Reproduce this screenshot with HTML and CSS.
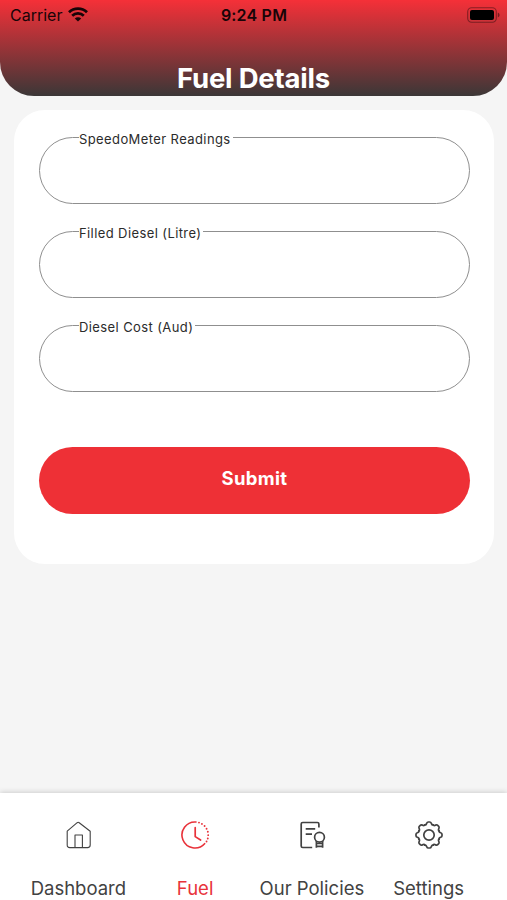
FILE: index.html
```
<!DOCTYPE html>
<html lang="en">
<head>
	<meta charset="utf-8">
	<meta name="viewport" content="width=device-width, initial-scale=1.0">
	<title>Fuel Details</title>
	<link rel="stylesheet" href="styles.css">
</head>
<body>
	<div class="screen">
		<header class="header">
			<div class="status-bar">
				<div class="carrier">
					<span>Carrier</span>
					<svg class="wifi" width="20" height="15" viewBox="0 0 20 15" fill="none" stroke="currentColor" stroke-width="2.7">
						<path d="M1 5.3a12.8 12.8 0 0 1 18 0"/>
						<path d="M4.2 8.7a8.2 8.2 0 0 1 11.6 0"/>
						<path d="M10 14.6L6.8 11.5a4.5 4.5 0 0 1 6.4 0z" fill="currentColor" stroke="none"/>
					</svg>
				</div>
				<span class="time">9:24 PM</span>
				<svg class="battery" width="33" height="16" viewBox="0 0 33 16">
					<rect x=".7" y=".7" width="28.6" height="14.6" rx="4" fill="none" stroke="#000" stroke-opacity=".4" stroke-width="1.1"/>
					<rect x="3" y="3" width="24" height="10" rx="2"/>
					<path d="M30.8 5.5q1.8.8 1.8 2.5t-1.8 2.5z" fill-opacity=".45"/>
				</svg>
			</div>
			<h1 class="title">Fuel Details</h1>
		</header>

		<form class="card">
			<fieldset class="field">
				<legend>SpeedoMeter Readings</legend>
				<input type="text" name="speedometer" aria-label="SpeedoMeter Readings">
			</fieldset>
			<fieldset class="field">
				<legend>Filled Diesel (Litre)</legend>
				<input type="text" name="litres" aria-label="Filled Diesel (Litre)">
			</fieldset>
			<fieldset class="field">
				<legend>Diesel Cost (Aud)</legend>
				<input type="text" name="cost" aria-label="Diesel Cost (Aud)">
			</fieldset>
			<button class="submit" type="button">Submit</button>
		</form>

		<nav class="tabs">
			<a class="tab">
				<svg width="28" height="28" viewBox="-1 0 28 28" fill="none" stroke="currentColor" stroke-width="1.1" stroke-linejoin="round">
					<path d="M2.2 10.2L12.2 1.7q1-.8 2 0L25.200 10.2V24q0 2.6-2.6 2.6H4.800Q2.200 26.6 2.200 24z"/>
					<path d="M10 26.6V14h7.4v12.6"/>
				</svg>
				<span>Dashboard</span>
			</a>
			<a class="tab active">
				<svg width="28" height="28" viewBox="-1 0 28 28" fill="none" stroke="currentColor" stroke-width="1.6" stroke-linecap="round">
					<path d="M14 1A13 13 0 1 0 22.6 22.7"/>
					<path d="M17 1.6A13 13 0 0 1 24.4 20.7" stroke-width="1.9" stroke-dasharray="0 3.3"/>
					<path d="M13.2 6.7V15.6L18.6 19" stroke-width="1.7" stroke-linejoin="round"/>
				</svg>
				<span>Fuel</span>
			</a>
			<a class="tab">
				<svg width="28" height="28" viewBox="-.7 0 28 28" fill="none" stroke="currentColor" stroke-width="1.7">
					<path d="M20.2 6.5V3q0-1.5-1.5-1.5H4Q2.5 1.5 2.5 3V25q0 1.5 1.5 1.5H13.5"/>
					<path d="M7 7.8H16.5M7 13.2H13.3"/>
					<circle cx="20.8" cy="16.200" r="4.9"/>
					<path d="M17.7 20V26.8M23.9 20V26.8M17.7 22.5H23.9M17.7 25.4H23.9"/>
				</svg>
				<span>Our Policies</span>
			</a>
			<a class="tab">
				<svg width="28" height="28" viewBox="-14 -14 28 28" fill="none" stroke="currentColor" stroke-width="1.7" stroke-linecap="round">
					<defs>
						<path id="tooth" d="M-4.2-10.1C-3-9.7-2.7-10.6-2.3-11.7Q-1.8-13-.7-13H.7Q1.8-13 2.3-11.7C2.7-10.6 3-9.7 4.2-10.1"/>
					</defs>
					<use href="#tooth"/>
					<use href="#tooth" transform="rotate(45)"/>
					<use href="#tooth" transform="rotate(90)"/>
					<use href="#tooth" transform="rotate(135)"/>
					<use href="#tooth" transform="rotate(180)"/>
					<use href="#tooth" transform="rotate(225)"/>
					<use href="#tooth" transform="rotate(270)"/>
					<use href="#tooth" transform="rotate(315)"/>
					<circle r="5.2"/>
				</svg>
				<span>Settings</span>
			</a>
		</nav>
	</div>
</body>
</html>
```
FILE: styles.css
```
* {
	box-sizing: border-box;
}
body {
	margin: 0;
	font-family: Inter, "Liberation Sans", sans-serif;
	background: #f5f5f5;
}
.screen {
	display: flex;
	flex-direction: column;
	height: 100vh;
}
.header {
	display: flex;
	flex-direction: column;
	height: 96px;
	border-radius: 0 0 34px 34px;
	background: linear-gradient(#f53038, #3b3737);
}
.status-bar {
	display: grid;
	grid-template-columns: 1fr auto 1fr;
	align-items: center;
	height: 29px;
	padding: 0 7px 0 10px;
	color: #180407;
	font-size: 16px;
}
.carrier {
	display: flex;
	align-items: center;
	gap: 6px;
}
.time {
	margin-right: 2px;
	font-weight: 600;
	letter-spacing: 0.2px;
}
.battery {
	justify-self: end;
}
.title {
	margin: 32px 0 0;
	color: white;
	font-size: 27.5px;
	font-weight: 700;
	line-height: 34px;
	text-align: center;
	letter-spacing: -0.2px;
}
.card {
	display: flex;
	flex-direction: column;
	height: 454px;
	margin: 14px 13px 0 14px;
	padding: 18.5px 24px 0 25px;
	border-radius: 31px;
	background: white;
}
.field {
	height: 75.5px;
	margin: 0 0 18.7px;
	padding: 0 30px 0 39px;
	border: 1px solid #8f8f8f;
	border-radius: 34px;
}
.field legend {
	padding: 3px 2px 0 0;
	color: #2b2b2b;
	font-size: 13px;
	line-height: 14px;
	letter-spacing: 0.4px;
}
.field input {
	width: 100%;
	height: 50px;
	border: 0;
	outline: 0;
	background: none;
	font: inherit;
}
.submit {
	height: 67px;
	margin-top: 36px;
	padding: 0 0 5px;
	border: 0;
	border-radius: 34px;
	background: #ee3036;
	color: white;
	font-family: inherit;
	font-size: 18.5px;
	font-weight: 700;
	letter-spacing: 0.3px;
}
.tabs {
	display: flex;
	height: 107px;
	margin-top: auto;
	padding: 28px 20px 0;
	background: white;
	box-shadow: 0 -1px 5px rgba(0, 0, 0, 0.16);
}
.tab {
	display: flex;
	flex: 1;
	flex-direction: column;
	align-items: center;
	gap: 27px;
	color: #424242;
	font-size: 18.5px;
	line-height: 24px;
	white-space: nowrap;
}
.active {
	color: #e8323a;
}
```
